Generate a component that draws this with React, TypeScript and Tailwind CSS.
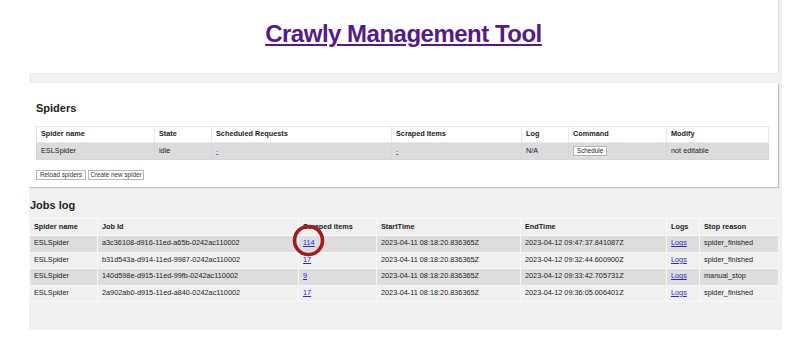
import React from "react";

const spiderCols = [118, 57, 180, 130, 47, 98, 102];
const jobCols = [68, 201, 78, 144, 146, 33, 79];

const jobs = [
  ["ESLSpider", "a3c36108-d916-11ed-a65b-0242ac110002", "114", "2023-04-11 08:18:20.836365Z", "2023-04-12 09:47:37.841087Z", "spider_finished"],
  ["ESLSpider", "b31d543a-d914-11ed-9987-0242ac110002", "17", "2023-04-11 08:18:20.836365Z", "2023-04-12 09:32:44.600900Z", "spider_finished"],
  ["ESLSpider", "140d598e-d915-11ed-99fb-0242ac110002", "9", "2023-04-11 08:18:20.836365Z", "2023-04-12 09:33:42.705731Z", "manual_stop"],
  ["ESLSpider", "2a902ab0-d915-11ed-a840-0242ac110002", "17", "2023-04-11 08:18:20.836365Z", "2023-04-12 09:36:05.006401Z", "spider_finished"],
];

export default function App() {
  return (
    <div
      className="w-[812px] h-[345px] bg-white relative overflow-hidden text-[#222]"
      style={{ fontFamily: '"Liberation Sans", Arial, sans-serif' }}
    >
      <div className="ml-[29px] w-[753px] h-[330px] bg-[#f0f0f0] flex flex-col">
        {/* title card */}
        <div className="w-[749px] h-[73px] bg-white shadow-[1px_0_1px_rgba(0,0,0,0.06)] flex justify-center">
          <a
            href="#"
            className="mt-[16px] h-fit text-[24px] font-bold tracking-[-0.5px] text-[#551a8b] underline decoration-[2px] underline-offset-[2px]"
          >
            Crawly Management Tool
          </a>
        </div>
        {/* band */}
        <div className="h-[10px] shrink-0" />
        {/* spiders card */}
        <div className="w-[749px] h-[104px] bg-white shadow-[1px_1px_1px_rgba(0,0,0,0.2)] pl-[7px] pt-[19px]">
          <div className="text-[11px] font-bold leading-[13px]">Spiders</div>
          <table className="mt-[11px] table-fixed border-collapse text-[7.3px] w-[732px]">
            <colgroup>
              {spiderCols.map((w, i) => (
                <col key={i} style={{ width: w }} />
              ))}
            </colgroup>
            <thead>
              <tr className="h-[16px] bg-white">
                {["Spider name", "State", "Scheduled Requests", "Scraped Items", "Log", "Command", "Modify"].map((h) => (
                  <th key={h} className="border border-[#e8e8e8] px-[4px] py-0 text-left font-bold">
                    {h}
                  </th>
                ))}
              </tr>
            </thead>
            <tbody>
              <tr className="h-[17px] bg-[#dcdcdc]">
                <td className="border border-[#d6d6d6] px-[4px] py-0">ESLSpider</td>
                <td className="border border-[#d6d6d6] px-[4px] py-0">idle</td>
                <td className="border border-[#d6d6d6] px-[4px] py-0">
                  <a href="#" className="text-[#6a6acc] underline">-</a>
                </td>
                <td className="border border-[#d6d6d6] px-[4px] py-0">
                  <a href="#" className="text-[#6a6acc] underline">-</a>
                </td>
                <td className="border border-[#d6d6d6] px-[4px] py-0">N/A</td>
                <td className="border border-[#d6d6d6] px-[4px] py-0">
                  <button className="h-[10px] px-[3px] bg-white border border-[#b8b8b8] text-[6.3px] leading-[8px] align-middle">
                    Schedule
                  </button>
                </td>
                <td className="border border-[#d6d6d6] px-[4px] py-0">not editable</td>
              </tr>
            </tbody>
          </table>
          <div className="mt-[10px] flex gap-[2px]">
            <button className="h-[10px] w-[50px] bg-white border border-[#b8b8b8] text-[6.3px] leading-[8px] text-[#333]">
              Reload spiders
            </button>
            <button className="h-[10px] w-[56px] bg-white border border-[#b8b8b8] text-[6.3px] leading-[8px] text-[#333]">
              Create new spider
            </button>
          </div>
        </div>
        {/* jobs log */}
        <div className="pt-[12px] relative">
          <div className="text-[11px] font-bold leading-[13px] pl-[1px]">Jobs log</div>
          <table className="mt-[6px] table-fixed border-collapse text-[7.3px] w-[749px]">
            <colgroup>
              {jobCols.map((w, i) => (
                <col key={i} style={{ width: w }} />
              ))}
            </colgroup>
            <thead>
              <tr className="h-[17px] bg-[#f0f0f0]">
                {["Spider name", "Job Id", "Scraped items", "StartTime", "EndTime", "Logs", "Stop reason"].map((h) => (
                  <th key={h} className="border border-[#fafafa] px-[4px] py-0 text-left font-bold">
                    {h}
                  </th>
                ))}
              </tr>
            </thead>
            <tbody>
              {jobs.map((r, i) => (
                <tr key={i} className={`h-[16.5px] ${i % 2 === 0 ? "bg-[#dddddd]" : "bg-[#f0f0f0]"}`}>
                  <td className="border border-[#f8f8f8] px-[4px] py-0">{r[0]}</td>
                  <td className="border border-[#f8f8f8] px-[4px] py-0">{r[1]}</td>
                  <td className="border border-[#f8f8f8] px-[4px] py-0">
                    <a href="#" className="text-[#2a2ad0] underline">{r[2]}</a>
                  </td>
                  <td className="border border-[#f8f8f8] px-[4px] py-0">{r[3]}</td>
                  <td className="border border-[#f8f8f8] px-[4px] py-0">{r[4]}</td>
                  <td className="border border-[#f8f8f8] px-[4px] py-0">
                    <a href="#" className="text-[#2a2ad0] underline">Logs</a>
                  </td>
                  <td className="border border-[#f8f8f8] px-[4px] py-0">{r[5]}</td>
                </tr>
              ))}
            </tbody>
          </table>
          <svg
            className="absolute left-[263px] top-[37px]"
            width="33"
            height="33"
            viewBox="0 0 33 33"
          >
            <ellipse cx="16.5" cy="16.5" rx="14" ry="14" fill="none" stroke="#a01d1d" strokeWidth="3.6" />
          </svg>
        </div>
      </div>
    </div>
  );
}
